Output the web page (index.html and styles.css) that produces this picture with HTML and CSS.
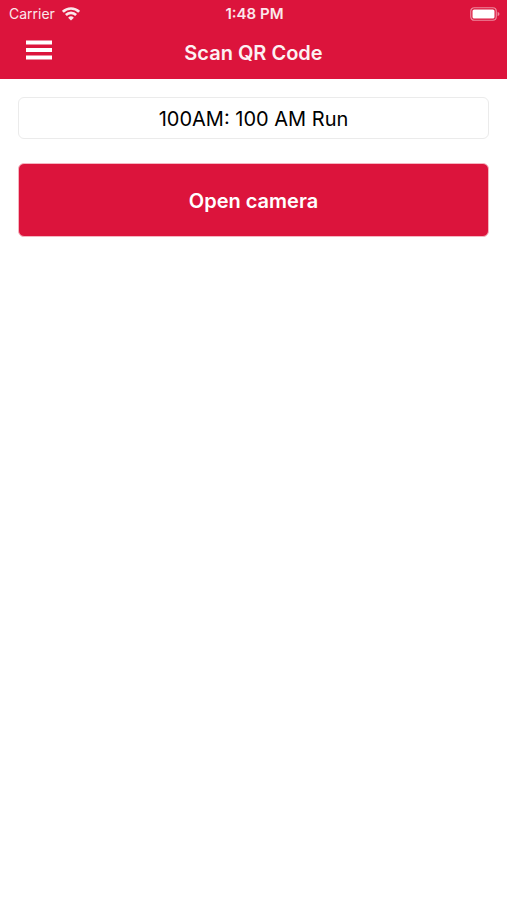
FILE: index.html
```
<!DOCTYPE html>
<html lang="en">
<head>
<meta charset="utf-8">
<meta name="viewport" content="width=device-width, initial-scale=1">
<title>Scan QR Code</title>
<link rel="stylesheet" href="styles.css">
</head>
<body>
<header class="header">
  <div class="status">
    <div class="carrier">
      <span>Carrier</span>
      <svg class="wifi" viewBox="0 0 18 14" aria-hidden="true">
        <g fill="none" stroke="currentColor" stroke-width="2.6">
          <path d="M.9 4.8a11.5 11.5 0 0 1 16.2 0"/>
          <path d="M3.9 8a7.2 7.2 0 0 1 10.2 0"/>
        </g>
        <path fill="currentColor" d="M9 13.6 6.1 10.7a4.1 4.1 0 0 1 5.8 0z"/>
      </svg>
    </div>
    <time class="time">1:48 PM</time>
    <svg class="battery" viewBox="0 0 30 14" aria-hidden="true">
      <rect x=".75" y=".75" width="25.5" height="12.5" rx="3.5" fill="none" stroke="currentColor" stroke-width="1.2" opacity=".5"/>
      <rect x="2.5" y="2.5" width="22" height="9" rx="1.6" fill="currentColor"/>
      <path d="M27.6 4.7q1.9.7 1.9 2.3t-1.9 2.3z" fill="currentColor" opacity=".5"/>
    </svg>
  </div>
  <div class="nav">
    <button class="menu" type="button" aria-label="Menu">
      <svg class="menu-icon" viewBox="0 0 26 20" aria-hidden="true">
        <path fill="currentColor" d="M0 .5h26v4H0zM0 8h26v4H0zM0 15.5h26v4H0z"/>
      </svg>
    </button>
    <h1 class="title">Scan QR Code</h1>
  </div>
</header>
<main class="content">
  <select class="event" aria-label="Event">
    <option>100AM: 100 AM Run</option>
  </select>
  <button class="camera" type="button">Open camera</button>
</main>
</body>
</html>
```
FILE: styles.css
```
* {
  box-sizing: border-box;
}

body {
  margin: 0;
  background: #fff;
  color: #000;
  font-family: Inter, "Liberation Sans", sans-serif;
}

.header {
  background: #dc143c;
  color: #fff;
}

.status {
  display: grid;
  grid-template-columns: 1fr auto 1fr;
  align-items: center;
  height: 27px;
  padding: 0 7px 0 9px;
  font-size: 14px;
  line-height: 27px;
}

.carrier {
  display: flex;
  align-items: center;
  gap: 7px;
  opacity: .9;
}

.wifi {
  width: 18px;
  height: 14px;
}

.time {
  font-size: 15px;
  font-weight: 600;
  opacity: .9;
}

.battery {
  width: 30px;
  height: 14px;
  justify-self: end;
}

.nav {
  display: grid;
  grid-template-columns: 1fr auto 1fr;
  align-items: center;
  height: 52px;
  padding: 0 18px;
}

.menu {
  justify-self: start;
  display: flex;
  padding: 8px 8px 14px;
  border: 0;
  background: none;
  color: inherit;
}

.menu-icon {
  width: 26px;
  height: 20px;
}

.title {
  margin: 0;
  font-size: 20px;
  font-weight: 600;
  line-height: 24px;
  opacity: .94;
}

.content {
  display: flex;
  flex-direction: column;
  gap: 24px;
  padding: 18px;
}

.event,
.camera {
  width: 100%;
  margin: 0;
  padding: 2px 12px 0;
  border-radius: 6px;
  font-family: inherit;
  font-size: 20px;
  text-align: center;
}

.event {
  appearance: none;
  height: 42px;
  border: 1px solid #ebebeb;
  background: #fff;
  color: #000;
  text-align-last: center;
}

.camera {
  height: 74px;
  border: 1px solid #f5b5c1;
  background: #dc143c;
  color: #fff;
  font-weight: 600;
}
```
